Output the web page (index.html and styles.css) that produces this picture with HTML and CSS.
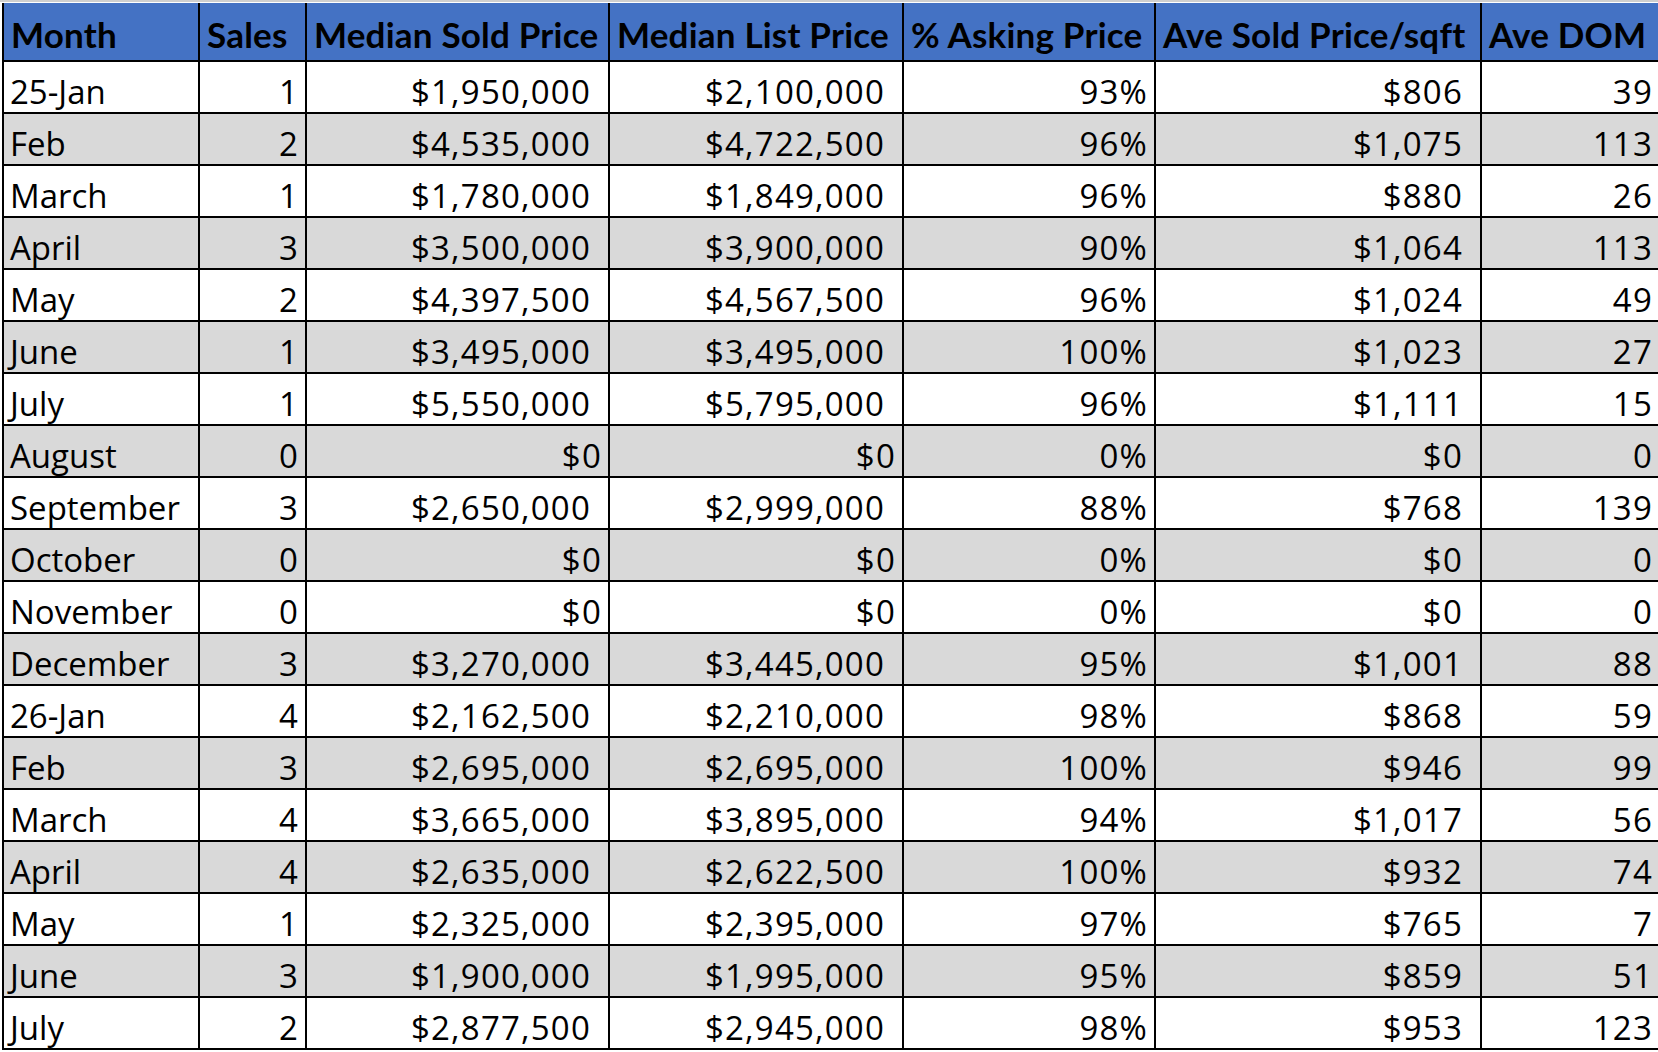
FILE: index.html
```html
<!DOCTYPE html>
<html lang="en">
<head>
<meta charset="utf-8">
<title>Monthly Sales</title>
<link rel="stylesheet" href="styles.css">
</head>
<body>
<div class="sheet">
<table class="report">
<colgroup>
<col class="c-month"><col class="c-sales"><col class="c-sold"><col class="c-list"><col class="c-ask"><col class="c-sqft"><col class="c-dom">
</colgroup>
<thead>
<tr><th>Month</th><th>Sales</th><th>Median Sold Price</th><th>Median List Price</th><th>% Asking Price</th><th>Ave Sold Price/sqft</th><th>Ave DOM</th></tr>
</thead>
<tbody>
<tr><td>25-Jan</td><td>1</td><td class="cur">$1,950,000</td><td class="cur">$2,100,000</td><td>93%</td><td class="cur">$806</td><td>39</td></tr>
<tr><td>Feb</td><td>2</td><td class="cur">$4,535,000</td><td class="cur">$4,722,500</td><td>96%</td><td class="cur">$1,075</td><td>113</td></tr>
<tr><td>March</td><td>1</td><td class="cur">$1,780,000</td><td class="cur">$1,849,000</td><td>96%</td><td class="cur">$880</td><td>26</td></tr>
<tr><td>April</td><td>3</td><td class="cur">$3,500,000</td><td class="cur">$3,900,000</td><td>90%</td><td class="cur">$1,064</td><td>113</td></tr>
<tr><td>May</td><td>2</td><td class="cur">$4,397,500</td><td class="cur">$4,567,500</td><td>96%</td><td class="cur">$1,024</td><td>49</td></tr>
<tr><td>June</td><td>1</td><td class="cur">$3,495,000</td><td class="cur">$3,495,000</td><td>100%</td><td class="cur">$1,023</td><td>27</td></tr>
<tr><td>July</td><td>1</td><td class="cur">$5,550,000</td><td class="cur">$5,795,000</td><td>96%</td><td class="cur">$1,111</td><td>15</td></tr>
<tr><td>August</td><td>0</td><td>$0</td><td>$0</td><td>0%</td><td class="cur">$0</td><td>0</td></tr>
<tr><td>September</td><td>3</td><td class="cur">$2,650,000</td><td class="cur">$2,999,000</td><td>88%</td><td class="cur">$768</td><td>139</td></tr>
<tr><td>October</td><td>0</td><td>$0</td><td>$0</td><td>0%</td><td class="cur">$0</td><td>0</td></tr>
<tr><td>November</td><td>0</td><td>$0</td><td>$0</td><td>0%</td><td class="cur">$0</td><td>0</td></tr>
<tr><td>December</td><td>3</td><td class="cur">$3,270,000</td><td class="cur">$3,445,000</td><td>95%</td><td class="cur">$1,001</td><td>88</td></tr>
<tr><td>26-Jan</td><td>4</td><td class="cur">$2,162,500</td><td class="cur">$2,210,000</td><td>98%</td><td class="cur">$868</td><td>59</td></tr>
<tr><td>Feb</td><td>3</td><td class="cur">$2,695,000</td><td class="cur">$2,695,000</td><td>100%</td><td class="cur">$946</td><td>99</td></tr>
<tr><td>March</td><td>4</td><td class="cur">$3,665,000</td><td class="cur">$3,895,000</td><td>94%</td><td class="cur">$1,017</td><td>56</td></tr>
<tr><td>April</td><td>4</td><td class="cur">$2,635,000</td><td class="cur">$2,622,500</td><td>100%</td><td class="cur">$932</td><td>74</td></tr>
<tr><td>May</td><td>1</td><td class="cur">$2,325,000</td><td class="cur">$2,395,000</td><td>97%</td><td class="cur">$765</td><td>7</td></tr>
<tr><td>June</td><td>3</td><td class="cur">$1,900,000</td><td class="cur">$1,995,000</td><td>95%</td><td class="cur">$859</td><td>51</td></tr>
<tr><td>July</td><td>2</td><td class="cur">$2,877,500</td><td class="cur">$2,945,000</td><td>98%</td><td class="cur">$953</td><td>123</td></tr>
</tbody>
</table>
</div>
</body>
</html>
```

FILE: styles.css
```css
html, body {
  margin: 0;
  padding: 0;
  background: #ffffff;
  overflow: hidden;
}

body {
  border-top: 2px solid #cfcfcf;
}

.sheet {
  padding: 1px 0 0 2px;
  width: 1700px;
}

.report {
  border-collapse: collapse;
  table-layout: fixed;
  width: 1658px;
  color: #000000;
}

.c-month { width: 196px; }
.c-sales { width: 107px; }
.c-sold  { width: 303px; }
.c-list  { width: 294px; }
.c-ask   { width: 252px; }
.c-sqft  { width: 326px; }
.c-dom   { width: 180px; }

.report th {
  background: #4472c4;
  font-family: Lato, "Liberation Sans", sans-serif;
  font-size: 35px;
  font-weight: 700;
  letter-spacing: 0.2px;
  line-height: 41px;
  text-align: left;
  white-space: nowrap;
  padding: 11px 2px 5px 7px;
  border-left: 2px solid #000000;
  border-right: 2px solid #000000;
  border-bottom: 2px solid #000000;
  vertical-align: bottom;
}

.report td {
  font-family: "Open Sans", "Noto Sans", sans-serif;
  font-size: 33px;
  letter-spacing: 1.2px;
  line-height: 36px;
  text-align: right;
  white-space: nowrap;
  padding: 12px 6px 2px 7px;
  border: 2px solid #000000;
  vertical-align: bottom;
}

.report td.cur {
  padding-right: 17px;
}

.report td:last-child {
  padding-right: 7px;
}

.report td:first-child {
  text-align: left;
  letter-spacing: 0;
  padding-left: 6px;
}

.report tbody tr:nth-child(even) td {
  background: #d9d9d9;
}
```
